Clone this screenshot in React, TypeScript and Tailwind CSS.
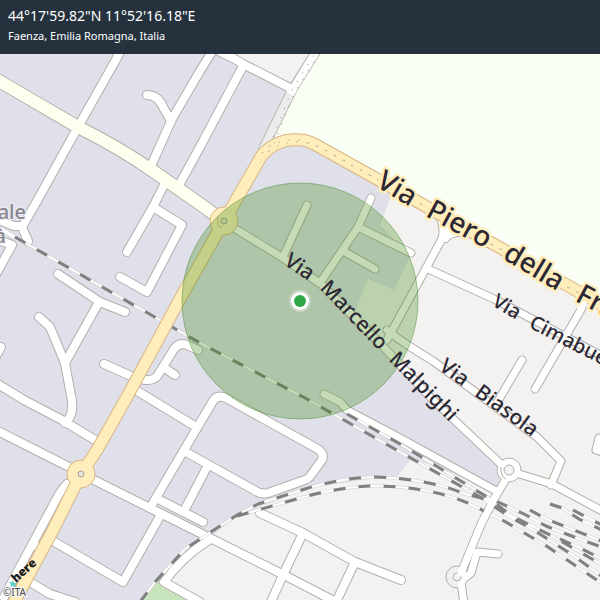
import React from "react";

const localRoads: string[] = [
  "M96 -4 L118 56 L78 127 L37 201 L22 227 L28 241",
  "M145 -4 L118 56",
  "M-6 218 L14 226 L22 226",
  "M-6 238 L12 245 L-6 278",
  "M151 166 L172 119 L200 71 L218 42 L243 -4",
  "M147 95 Q158 95 163 107 L171 121",
  "M178 187 L200 147 L243 66",
  "M140 -4 L200 38 L222 53 Q236 59 243 64 L292 89",
  "M283 -4 L327 22",
  "M311 11 L320 -4",
  "M164 185 L153 207 L127 252",
  "M153 207 L182 225 L147 292 L120 277",
  "M58 274 L100 302 L125 312",
  "M99 302 L65 363",
  "M39 317 L50 327 L65 363 L72 401 Q74 415 65 423",
  "M-4 383 L24 400 L62 420 L100 443",
  "M1 347 L-6 360",
  "M104 364 L133 377 Q152 384 158 375 L174 349 Q179 342 187 345 L198 350",
  "M163 367 L175 375",
  "M134 389 L193 425",
  "M-4 430 L75 470",
  "M86 476 L150 508 L200 533 L284 575 L338 603",
  "M150 508 L184 450 L213 401 Q217 394 226 398 L316 448 Q325 453 322 460 L311 475 Q309 479 302 481 L268 493 Q261 495 254 490 L184 451",
  "M156 498 L203 522",
  "M184 511 L207 467",
  "M159 518 L123 582 L53 541",
  "M28 581 L50 594 L75 602",
  "M67 484 Q62 489 57 498 L4 597",
  "M36 546 L44 550",
  "M260 513 L303 533 L355 562 L401 580",
  "M303 533 L283 575 L270 604",
  "M355 562 L337 600",
  "M209 540 Q183 556 164 582 L200 602",
];

const outerRoads: string[] = [
  "M307 205 L283 257",
  "M371 198 L358 227 L320 283",
  "M358 227 L411 253",
  "M345 252 L375 269",
  "M443 237 L387 340",
  "M426 268 L494 299 L604 357",
  "M582 308 L535 389",
  "M522 360 L498 401",
  "M387 330 Q400 341 433 361 L537 437 L561 461 L551 485",
  "M226 223 L283 258 L321 284 L380 343 L430 397 L504 467",
  "M324 394 L340 402 L347 410 L400 438 L498 492",
  "M516 473 L552 484 L604 512",
  "M606 438 L599 438 L596 450 L606 453",
  "M506 479 L497 494 L482 522 L461 573",
  "M461 582 L464 604",
  "M498 554 L477 552 L471 573 L466 577",
];

const creamRoad = "M-6 78 L78 127 Q120 148 153 171 L200 204 L222 220";

const yellowRoads: string[] = [
  "M224 221 L262 155 Q278 138 300 140 Q307 140 316 145 L377 179 L497 246 L606 307",
  "M224 221 L180 299 L128 395 L97 450 L81 474 L53 530 L12 606",
];

const rails: string[] = [
  "M15 237 L200 343 L307 399 L400 452 L480 497 L510 517 L532 529 L574 556 L604 578",
  "M347 414 L400 444 L487 497 L512 516 L554 537 L604 566",
  "M140 602 L155 582 L185 549 L237 515 L258 504 L305 489 Q340 478 375 477 Q430 479 465 494 L498 502 L524 514 L546 526 L569 535 L604 548",
  "M237 516 L300 498 Q340 487 370 486 Q430 486 470 504 L504 521 L548 547 L604 585",
  "M530 510 L546 519 L569 528 L604 542",
  "M550 504 L562 508 L579 519 L604 531",
  "M573 510 L592 520 L604 526",
  "M560 539 L580 548 L604 560",
];

const dottedWays: string[] = [
  "M262 153 L270 144 L292 90 L317 50 L346 0",
  "M262 153 Q278 138 300 140 L316 145 L377 179",
  "M404 194 L426 207",
  "M483 240 L507 252",
  "M560 283 L582 294",
];

type StreetName = {
  id: string;
  path: string;
  size: string;
  halo: string;
  words: { text: string; at: number }[];
};

const streetNames: StreetName[] = [
  {
    id: "piero",
    path: "M375 186 L427 217 L488 250 L562 294 L680 357",
    size: "text-[28px]",
    halo: "stroke-[#ffeebb]",
    words: [
      { text: "Via", at: 0 },
      { text: "Piero", at: 58 },
      { text: "della", at: 146 },
      { text: "Francesca", at: 230 },
    ],
  },
  {
    id: "marcello",
    path: "M283 264 L307 280 Q320 288 332 302 L382 354 L480 453",
    size: "text-[21px]",
    halo: "stroke-none",
    words: [
      { text: "Via", at: 0 },
      { text: "Marcello", at: 44 },
      { text: "Malpighi", at: 143 },
    ],
  },
  {
    id: "cimabue",
    path: "M491 305 L530 328 L600 364 L660 395",
    size: "text-[20px]",
    halo: "stroke-none",
    words: [
      { text: "Via", at: 0 },
      { text: "Cimabue", at: 43 },
    ],
  },
  {
    id: "biasola",
    path: "M438 369 L475 396 L560 458",
    size: "text-[21px]",
    halo: "stroke-none",
    words: [
      { text: "Via", at: 0 },
      { text: "Biasola", at: 44 },
    ],
  },
];

function Strokes({ paths, className }: { paths: string[]; className: string }) {
  return (
    <g className={className} fill="none" strokeLinejoin="round">
      {paths.map((d) => (
        <path key={d} d={d} />
      ))}
    </g>
  );
}

function LandUse() {
  return (
    <g>
      <rect width="600" height="600" fill="#e0e0eb" />
      <path d="M217 48 L292 89 L350 0 L240 0 Z" fill="#f3f2f1" />
      <path d="M350 0 L292 90 L266 148 Q295 130 316 145 L600 305 L600 0 Z" fill="#f9fff5" />
      <path
        d="M393 192 L380 225 L410 257 L394 290 L368 279 L354 314 L504 468 L496 490 L412 458 L397 477 L375 478 L305 489 L237 516 L155 582 L140 600 L600 600 L600 305 Z"
        fill="#f3f2f1"
      />
      <path d="M140 600 L157 578 L196 600 Z" fill="#c8e4bd" />
    </g>
  );
}

function Roads() {
  return (
    <g>
      <Strokes paths={localRoads} className="stroke-[#b3afac] stroke-[10px] [stroke-linecap:round]" />
      <Strokes paths={outerRoads} className="stroke-[#b3afac] stroke-[9px] [stroke-linecap:round]" />
      <path d="M431 212 Q442 222 438 240 L447 243 Q450 236 464 236 Z" fill="#fff" stroke="#b3afac" />
      <circle cx="509" cy="470" r="12" fill="#fff" stroke="#b3afac" />
      <circle cx="457" cy="577" r="11" fill="#f1f0ef" stroke="#b3afac" />
      <path d={creamRoad} fill="none" stroke="#b3afac" strokeWidth="14" />
      <path d="M262 151 L292 90" fill="none" stroke="#bdbab8" strokeWidth="10" />
      <path d="M292 90 L317 50 L348 -4" fill="none" stroke="#bdbab8" strokeWidth="10" />

      <Strokes paths={localRoads} className="stroke-white stroke-[8px] [stroke-linecap:round]" />
      <Strokes paths={outerRoads} className="stroke-[#fffffe] stroke-[7px] [stroke-linecap:round]" />
      <path d="M262 151 L292 90" fill="none" stroke="#ededed" strokeWidth="8" />
      <path d="M290 94 L317 50 L348 -4" fill="none" stroke="#fff" strokeWidth="8" />
      <path d={creamRoad} fill="none" stroke="#fffff0" strokeWidth="12" />

      <circle cx="509" cy="470" r="5" fill="#f3f2f1" stroke="#b3afac" />
      <path d="M501 467 Q500 476 506 479" fill="none" stroke="#b3afac" />
      <circle cx="457" cy="577" r="4" fill="#f3f2f1" stroke="#b3afac" />
    </g>
  );
}

function Railways() {
  return (
    <g>
      <path d="M-4 226 L16 238" fill="none" stroke="#fff" strokeWidth="3" />
      <Strokes paths={rails} className="stroke-[#d3d1d0] stroke-[3px]" />
      <Strokes paths={rails} className="stroke-white stroke-2" />
      <Strokes paths={rails} className="stroke-[#808080] stroke-[3px] [stroke-dasharray:12_13]" />
      <path
        d="M498 492 L482 522 L461 573"
        fill="none"
        stroke="#fffffe"
        strokeWidth="7"
        strokeLinecap="round"
      />
    </g>
  );
}

function MainRoads() {
  return (
    <g>
      <Strokes paths={yellowRoads} className="stroke-[#d8b585] stroke-[13px]" />
      <circle cx="224" cy="221" r="14" fill="#ffeebb" stroke="#d8b585" />
      <circle cx="81" cy="474" r="14" fill="#ffeebb" stroke="#d8b585" />
      <Strokes paths={yellowRoads} className="stroke-[#ffeebb] stroke-[11px]" />
      <circle cx="224" cy="221" r="3" fill="#e9e2c9" stroke="#a79f97" />
      <circle cx="81" cy="474" r="3" fill="#e9e4da" stroke="#a79f97" />
      <path d="M218 217 v8 q0 2 4 2" fill="none" stroke="#e3bd8e" />
      <path d="M584 301 L580 310" stroke="#fffffe" strokeWidth="7" />
      <Strokes
        paths={dottedWays}
        className="stroke-[#8d8882] stroke-1 [stroke-dasharray:1_9]"
      />
      <g transform="translate(3 2)">
        <Strokes
          paths={dottedWays}
          className="stroke-[#8d8882] stroke-1 [stroke-dasharray:1_9] [stroke-dashoffset:5px]"
        />
      </g>
    </g>
  );
}

function Labels() {
  return (
    <g className="font-['Noto_Sans','Open_Sans',sans-serif] font-medium">
      <g
        className="fill-[#85858c] stroke-[#ececf2] stroke-2 text-[20px] [paint-order:stroke]"
        textAnchor="end"
      >
        <text x="26" y="219">ale</text>
        <text x="6" y="243">à</text>
      </g>
      {streetNames.map((name) => (
        <g key={name.id}>
          <path id={name.id} d={name.path} fill="none" />
          {name.words.map((word) => (
            <text
              key={word.text}
              className={`fill-[#2c2834] stroke-[5px] [paint-order:stroke] [stroke-linejoin:round] ${name.size} ${name.halo}`}
            >
              <textPath href={`#${name.id}`} startOffset={word.at}>
                {word.text}
              </textPath>
            </text>
          ))}
        </g>
      ))}
    </g>
  );
}

function Attribution() {
  return (
    <g>
      <path d="M13 580 l1 3 l3 0 l-2 2 l1 3 l-3 -2 l-3 1 l1 -3 l-2 -2 l3 0 Z" fill="#5cd0c4" />
      <text
        transform="translate(16 583) rotate(-42)"
        className="fill-[#1c1c1c] font-['Open_Sans',sans-serif] text-[12px] font-extrabold"
      >
        here
      </text>
      <text
        x="3"
        y="596"
        className="fill-[#4c4c50] stroke-[#f4f4f6] stroke-2 font-['Noto_Sans',sans-serif] text-[10px] [paint-order:stroke]"
      >
        ©ITA
      </text>
    </g>
  );
}

function MapCanvas() {
  return (
    <svg
      viewBox="0 0 600 600"
      className="block h-auto w-full"
      role="img"
      aria-label="Faenza, Emilia Romagna, Italia"
    >
      <LandUse />
      <Roads />
      <Railways />
      <MainRoads />
      <circle
        cx="300"
        cy="301"
        r="118"
        fill="#3c890f"
        fillOpacity="0.3"
        stroke="#4f8f35"
        strokeOpacity="0.5"
      />
      <Labels />
      <circle cx="300" cy="301" r="11" fill="#d5dcd2" fillOpacity="0.7" />
      <circle cx="300" cy="301" r="9" fill="#fff" />
      <circle cx="300" cy="301" r="6" fill="#2fa845" />
      <Attribution />
    </svg>
  );
}

export default function App() {
  return (
    <main className="relative w-full overflow-hidden bg-[#e0e0eb]">
      <MapCanvas />
      <header className="absolute inset-x-0 top-0 h-[54px] bg-[#1d2b36]/96 px-2 pt-1.5 font-['Noto_Sans','Open_Sans',sans-serif] text-white">
        <h1 className="text-sm leading-5">44°17'59.82"N 11°52'16.18"E</h1>
        <p className="text-[11px] leading-5">Faenza, Emilia Romagna, Italia</p>
      </header>
    </main>
  );
}
